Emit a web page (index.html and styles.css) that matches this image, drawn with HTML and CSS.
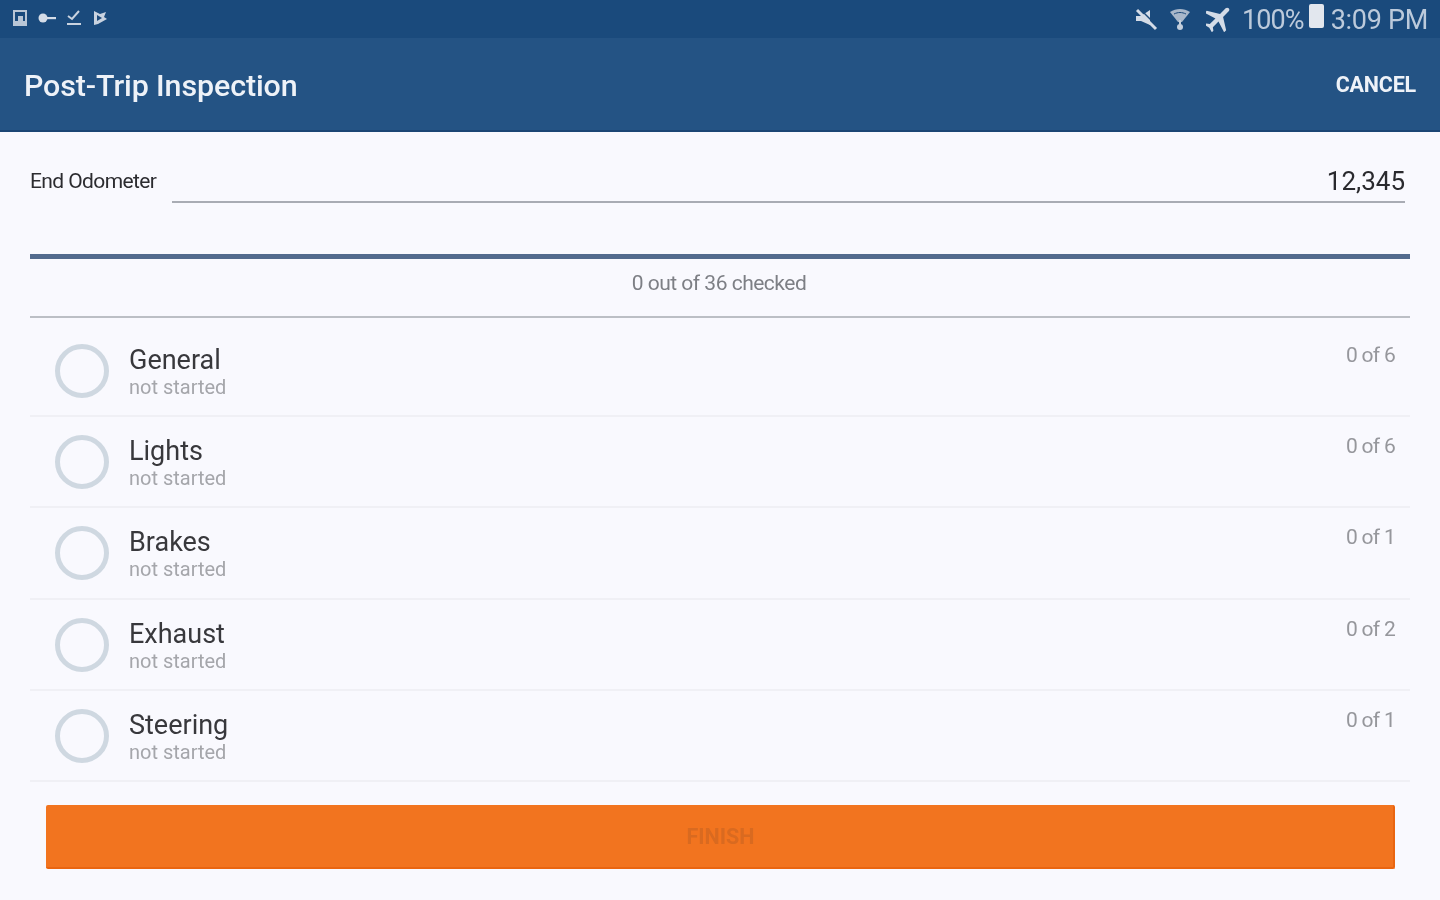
FILE: index.html
```html
<!DOCTYPE html>
<html lang="en">
<head>
<meta charset="utf-8">
<title>Post-Trip Inspection</title>
<link rel="stylesheet" href="styles.css">
</head>
<body>
<div class="status">
  <div class="status-left">
    <svg class="si" width="20" height="20" viewBox="0 0 20 20"><path fill="#b9c6d6" fill-rule="evenodd" d="M3 2h14v16H3zM5 4v9h10V4zM8 8h5v5H8z"/></svg>
    <svg class="si" width="20" height="20" viewBox="0 0 20 20"><circle cx="6" cy="10" r="4.500" fill="#d5dde8"/><rect x="9" y="9" width="10" height="2.200" fill="#d5dde8"/></svg>
    <svg class="si" width="20" height="20" viewBox="0 0 20 20"><path fill="none" stroke="#c9d3e0" stroke-width="2" d="M4 8l4 3 7-8M3 16h14"/></svg>
    <svg class="si" width="20" height="20" viewBox="0 0 20 20"><path fill="#c9d3e0" d="M3 3l6 3 6-2-2 5 3 2-9 5-4 1z"/><path fill="#1d4a7b" d="M6 7l5 3-5 3z"/></svg>
  </div>
  <div class="status-right">
    <svg class="sr mute" width="26" height="26" viewBox="0 0 26 26"><path fill="#d4dce7" d="M3 10h5l9-6v15l-9-4H3z"/><path stroke="#d4dce7" stroke-width="3" d="M4 4l19 19"/><path stroke="#1d4a7b" stroke-width="1.500" d="M7 3l17 17"/></svg>
    <svg class="sr wifi" width="24" height="26" viewBox="0 0 24 26"><path fill="#a8b7ca" d="M2 6c6-4 14-4 20 0l-8 10h-4z"/><path fill="none" stroke="#1d4a7b" d="M6 8c4-2 8-2 12 0"/><circle cx="12" cy="21" r="3" fill="#c4cfdc"/><rect x="11" y="14" width="2" height="6" fill="#c4cfdc"/></svg>
    <svg class="sr plane" width="26" height="26" viewBox="3 3 18 18"><path fill="#d4dce7" transform="rotate(45 12 12)" d="M21 16v-2l-8-5V3.500c0-.83-.67-1.500-1.500-1.500S10 2.670 10 3.500V9l-8 5v2l8-2.500V19l-2 1.500V22l3.500-1 3.500 1v-1.500L13 19v-5.500l8 2.500z"/></svg>
    <span class="pct">100%</span>
    <span class="batt"></span>
    <span class="clock">3:09 PM</span>
  </div>
</div>
<header class="appbar">
  <h1 class="title">Post-Trip Inspection</h1>
  <span class="cancel">CANCEL</span>
</header>
<main class="content">
  <div class="odo">
    <span class="odo-label">End Odometer</span>
    <span class="odo-field">12,345</span>
  </div>
  <div class="progress">0 out of 36 checked</div>
  <ul class="list">
    <li class="row"><span class="ring"></span><div class="names"><div class="name">General</div><div class="state">not started</div></div><span class="count">0 of 6</span></li>
    <li class="row"><span class="ring"></span><div class="names"><div class="name">Lights</div><div class="state">not started</div></div><span class="count">0 of 6</span></li>
    <li class="row"><span class="ring"></span><div class="names"><div class="name">Brakes</div><div class="state">not started</div></div><span class="count">0 of 1</span></li>
    <li class="row"><span class="ring"></span><div class="names"><div class="name">Exhaust</div><div class="state">not started</div></div><span class="count">0 of 2</span></li>
    <li class="row"><span class="ring"></span><div class="names"><div class="name">Steering</div><div class="state">not started</div></div><span class="count">0 of 1</span></li>
  </ul>
  <div class="finish">FINISH</div>
</main>
</body>
</html>
```
FILE: styles.css
```css
* { box-sizing: border-box; }
html, body { margin: 0; height: 100%; }
body {
  width: 1440px;
  height: 900px;
  overflow: hidden;
  background: #f9f9fe;
  font-family: Roboto, "Liberation Sans", sans-serif;
  display: flex;
  flex-direction: column;
  filter: blur(0.7px);
}
.status {
  height: 38px;
  background: #1a4a7c;
  display: flex;
  justify-content: space-between;
  align-items: center;
  padding: 0 12px 0 10px;
}
.status-left { display: flex; gap: 7px; align-items: center; margin-top: -2px; }
.si { display: block; width: 20px; height: 20px; }
.status-right { display: flex; align-items: center; color: #bccadb; font-size: 27px; line-height: 38px; padding-top: 2px; }
.sr { display: block; margin-top: -2px; }
.mute { margin-right: 9px; }
.wifi { margin-right: 14px; }
.plane { margin-right: 10px; }
.pct { letter-spacing: -0.9px; }
.batt {
  width: 15px;
  height: 24px;
  margin: -8px 7px 0 5px;
  background: #e2e7ee;
  border-radius: 2px;
}
.clock { letter-spacing: -0.3px; }
.appbar {
  height: 94px;
  background: #245384;
  border-bottom: 2px solid #1c4674;
  display: flex;
  justify-content: space-between;
  align-items: center;
  padding: 0 24px;
  color: #eef2f8;
}
.title { margin: 0; font-size: 30.400px; font-weight: 500; letter-spacing: -0.1px; padding-top: 3px; }
.cancel { font-size: 21.500px; font-weight: 700; letter-spacing: -0.2px; padding-top: 1px; }
.content { flex: 1; display: flex; flex-direction: column; padding: 0 30px; }
.odo {
  height: 127px;
  padding-top: 34px;
  display: flex;
  align-items: flex-start;
  gap: 16px;
  border-bottom: 5px solid #536b8e;
}
.odo-label { font-size: 21px; letter-spacing: -0.6px; color: #2c2c30; line-height: 30px; }
.odo-field {
  flex: 1;
  height: 37px;
  margin-right: 5px;
  border-bottom: 2px solid #a9acb4;
  text-align: right;
  font-size: 26px;
  line-height: 30px;
  color: #2a2a2e;
}
.progress {
  height: 59px;
  border-bottom: 2px solid #bcbfc5;
  padding-right: 2px;
  text-align: center;
  font-size: 21px;
  letter-spacing: -0.5px;
  line-height: 48px;
  color: #7d7f85;
}
.list { list-style: none; margin: 0; padding: 8px 0 0; }
.row {
  height: 91.200px;
  border-bottom: 2px solid #f0f0f5;
  display: flex;
  align-items: flex-start;
  padding: 18px 15px 0 25px;
}
.ring {
  width: 54px;
  height: 54px;
  border: 5px solid #cfd8e1;
  border-radius: 50%;
  flex: none;
}
.names { margin-left: 20px; flex: 1; margin-top: 2px; }
.name { font-size: 27px; line-height: 28px; color: #38383c; }
.state { font-size: 20px; line-height: 26px; color: #a5a6ab; }
.count { font-size: 21px; line-height: 24px; color: #96979c; letter-spacing: -0.7px; margin-top: -1px; }
.finish {
  height: 64px;
  margin: 23px 15px 0 16px;
  padding-left: 2px;
  background: #f2741f;
  border-right: 2px solid #ea6510;
  border-bottom: 2px solid #ea6510;
  border-radius: 2px;
  text-align: center;
  font-size: 21.500px;
  font-weight: 700;
  line-height: 64px;
  color: #d96a20;
}
```
